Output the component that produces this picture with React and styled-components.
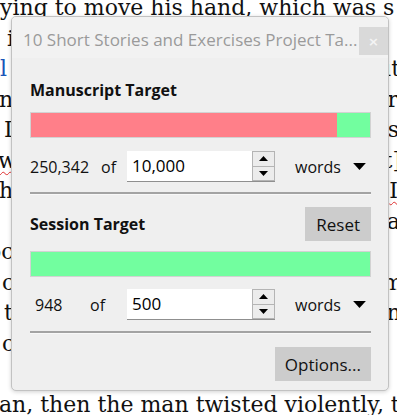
import React from 'react';
import styled, { createGlobalStyle } from 'styled-components';

const GlobalStyle = createGlobalStyle`
  html, body {
    margin: 0;
    padding: 0;
    background: #ffffff;
  }
  body {
    width: 397px;
    height: 415px;
    overflow: hidden;
    font-family: "Open Sans", "Noto Sans", sans-serif;
  }
`;

const Page = styled.div`
  position: relative;
  width: 397px;
  height: 415px;
  overflow: hidden;
  background: #ffffff;
`;

const Document = styled.div`
  display: flex;
  flex-direction: column;
  margin-top: -7px;
  font-family: "DejaVu Serif", "Liberation Serif", serif;
  font-size: 22px;
  color: #111111;
`;

const Line = styled.div`
  display: flex;
  justify-content: space-between;
  height: 30.5px;
  line-height: 30.5px;
  white-space: nowrap;
  overflow: hidden;
`;

const Piece = styled.span`
  margin-left: ${(p) => p.$left || 0}px;
  margin-right: ${(p) => p.$right || 0}px;
  color: ${(p) => (p.$link ? '#1a55b8' : 'inherit')};
  text-decoration: ${(p) => (p.$typo ? 'underline wavy #e03030' : 'none')};
  text-decoration-thickness: 1px;
  text-underline-offset: 3px;
`;

const Dialog = styled.div`
  position: absolute;
  left: 11px;
  top: 16px;
  width: 376px;
  height: 373px;
  display: flex;
  flex-direction: column;
  background: #efefef;
  border: 1px solid #c2c2c2;
  border-radius: 5px;
  box-shadow: 0 1px 4px rgba(0, 0, 0, 0.18);
  overflow: hidden;
`;

const TitleBar = styled.div`
  display: flex;
  align-items: flex-start;
  height: 41px;
  padding-left: 11px;
  background: #f2f2f2;
`;

const TitleText = styled.div`
  flex: 1;
  margin-top: 12px;
  font-size: 17px;
  line-height: 22px;
  color: #9a9a9a;
  white-space: nowrap;
  overflow: hidden;
`;

const CloseButton = styled.div`
  width: 29px;
  height: 28px;
  margin-top: 10px;
  display: flex;
  align-items: center;
  justify-content: center;
  background: #d9d9d9;
  color: #f4f4f4;
  font-family: "DejaVu Sans", sans-serif;
  font-size: 13px;
  font-weight: bold;
`;

const Body = styled.div`
  display: flex;
  flex-direction: column;
  padding: 0 17px 0 18px;
`;

const Header = styled.div`
  display: flex;
  align-items: center;
  justify-content: space-between;
  height: ${(p) => p.$height}px;
  margin-top: ${(p) => p.$top}px;
`;

const Heading = styled.div`
  font-size: 16px;
  font-weight: 700;
  color: #111111;
`;

const Button = styled.div`
  height: 34px;
  padding: 0 ${(p) => p.$pad}px;
  display: flex;
  align-items: center;
  background: #cccccc;
  font-size: 17px;
  color: #111111;
`;

const Bar = styled.div`
  display: flex;
  height: 24px;
  margin-top: ${(p) => p.$top}px;
  border: 1px solid #d2d2d2;
  background: #72fe9f;
`;

const Fill = styled.div`
  background: #ff7f89;
`;

const Row = styled.div`
  display: flex;
  align-items: center;
  height: 31px;
  margin-top: ${(p) => p.$top}px;
  font-size: 16px;
  color: #111111;
`;

const Count = styled.span`
  width: ${(p) => p.$width}px;
  padding-left: ${(p) => p.$indent}px;
  box-sizing: border-box;
`;

const Of = styled.span`
  width: ${(p) => p.$width}px;
`;

const Field = styled.div`
  display: flex;
  width: 148px;
  height: 31px;
  background: #ffffff;
  border-bottom: 1px solid #8f8f8f;
  box-sizing: border-box;
`;

const FieldValue = styled.div`
  flex: 1;
  padding-left: 5px;
  font-size: 17px;
  line-height: 30px;
  color: #000000;
`;

const Spinner = styled.div`
  display: flex;
  flex-direction: column;
  width: 23px;
  background: #f0f0f0;
`;

const SpinButton = styled.div`
  flex: 1;
  display: flex;
  align-items: center;
  justify-content: center;
  border: 1px solid #b4b4b4;
  border-top-width: ${(p) => (p.$down ? 0 : 1)}px;
  background: #ececec;
`;

const Units = styled.div`
  display: flex;
  align-items: center;
  margin-left: 20px;
  gap: 12px;
`;

const Separator = styled.div`
  height: 2px;
  margin-top: ${(p) => p.$top}px;
  background: #a3a3a3;
  border-bottom: 1px solid #f8f8f8;
`;

const Footer = styled.div`
  display: flex;
  justify-content: flex-end;
  margin-top: 13px;
`;

const Triangle = ({ up, size = 9 }) => (
  <svg width={size} height={Math.round(size * 0.55)} viewBox="0 0 10 5.5">
    <path d={up ? 'M0 5.5 L5 0 L10 5.5 Z' : 'M0 0 L10 0 L5 5.5 Z'} fill="#000" />
  </svg>
);

const Stepper = ({ value }) => (
  <Field>
    <FieldValue>{value}</FieldValue>
    <Spinner>
      <SpinButton>
        <Triangle up />
      </SpinButton>
      <SpinButton $down>
        <Triangle />
      </SpinButton>
    </Spinner>
  </Field>
);

const UnitPicker = () => (
  <Units>
    words
    <Triangle size={13} />
  </Units>
);

const lines = [
  [{ t: 'ying to move his hand, which was s', l: 0 }],
  [{ t: 'i', l: 7 }, { t: '', r: 0 }],
  [{ t: 'l', l: 0, link: true }, { t: 'it', r: -3 }],
  [{ t: 'n', l: -1 }, { t: 'r', r: -1 }],
  [{ t: 'I', l: 4 }, { t: 's', r: -2 }],
  [{ t: 'w', l: -2, typo: true }, { t: 't]', r: -4 }],
  [{ t: 'h', l: -1 }, { t: 'I', r: -1, typo: true }],
  [{ t: '', l: 0 }, { t: 'a', r: -3 }],
  [{ t: 'oc', l: -12 }, { t: '', r: 0 }],
  [{ t: 'c', l: 2 }, { t: 'm', r: -6 }],
  [{ t: 't', l: 4 }, { t: 'n', r: -4 }],
  [{ t: 'c', l: 2 }, { t: '', r: 0 }],
  [{ t: '', l: 0 }],
  [{ t: 'an, then the man twisted violently, t', l: -1 }],
];

export default function App() {
  return (
    <Page>
      <GlobalStyle />
      <Document>
        {lines.map((parts, i) => (
          <Line key={i}>
            {parts.map((p, j) => (
              <Piece key={j} $left={p.l} $right={p.r} $link={p.link} $typo={p.typo}>
                {p.t}
              </Piece>
            ))}
          </Line>
        ))}
      </Document>

      <Dialog>
        <TitleBar>
          <TitleText>10 Short Stories and Exercises Project Ta...</TitleText>
          <CloseButton>×</CloseButton>
        </TitleBar>
        <Body>
          <Header $height={24} $top={20}>
            <Heading>Manuscript Target</Heading>
          </Header>
          <Bar $top={10}>
            <Fill style={{ width: `${(306 / 339) * 100}%` }} />
          </Bar>
          <Row $top={13}>
            <Count $width={71} $indent={0}>250,342</Count>
            <Of $width={26}>of</Of>
            <Stepper value="10,000" />
            <UnitPicker />
          </Row>
          <Separator $top={10} />
          <Header $height={34} $top={12}>
            <Heading>Session Target</Heading>
            <Button $pad={11}>Reset</Button>
          </Header>
          <Bar $top={10} />
          <Row $top={12}>
            <Count $width={60} $indent={5}>948</Count>
            <Of $width={37}>of</Of>
            <Stepper value="500" />
            <UnitPicker />
          </Row>
          <Separator $top={11} />
          <Footer>
            <Button $pad={10}>Options...</Button>
          </Footer>
        </Body>
      </Dialog>
    </Page>
  );
}
